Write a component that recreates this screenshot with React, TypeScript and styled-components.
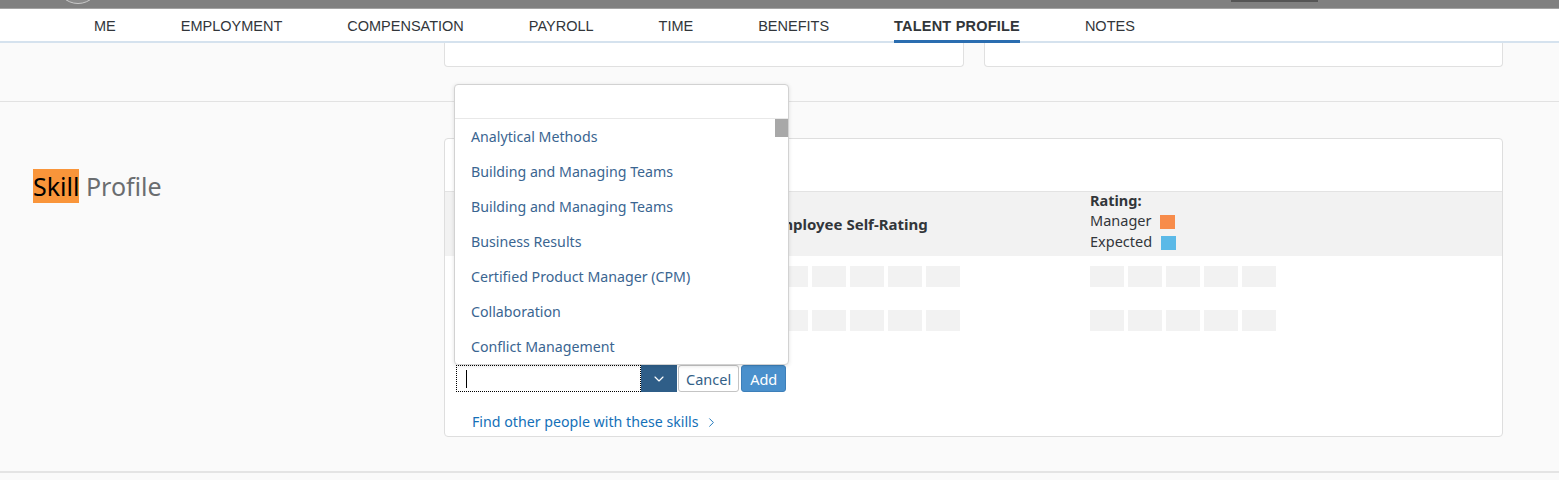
import React from 'react'
import styled, { createGlobalStyle } from 'styled-components'
import { ChevronDown, ChevronRight } from 'lucide-react'

const GlobalStyle = createGlobalStyle`
  body {
    margin: 0;
    background: #fafafa;
    font-family: "Noto Sans", "Open Sans", sans-serif;
    color: #32363a;
  }
  * { box-sizing: border-box; }
`

const ShellBar = styled.div`
  height: 9px;
  background: #808080;
  border-bottom: 1px solid #a3a3a3;
  display: flex;
  align-items: flex-end;
  padding-left: 56px;
  overflow: hidden;
`
const Avatar = styled.div`
  width: 44px;
  height: 44px;
  flex: none;
  border-radius: 50%;
  border: 1px solid #c9c9c9;
  background: #8a8a8a;
  margin-bottom: 4px;
`
const ShellSlot = styled.div`
  margin-left: auto;
  margin-right: 241px;
  align-self: flex-start;
  width: 87px;
  height: 2px;
  background: #555;
`

const Nav = styled.nav`
  height: 34px;
  background: #fff;
  border-bottom: 2px solid #d5e2ee;
  display: flex;
  gap: 65px;
  padding-left: 94px;
`
const Tab = styled.div<{ $active?: boolean }>`
  height: 34px;
  display: flex;
  align-items: center;
  font-family: "Liberation Sans", Arial, sans-serif;
  font-size: 14.5px;
  text-transform: uppercase;
  color: #32363a;
  font-weight: ${p => (p.$active ? 700 : 400)};
  letter-spacing: ${p => (p.$active ? '0.2px' : '0')};
  box-shadow: ${p => (p.$active ? 'inset 0 -3px 0 #2a6db0' : 'none')};
  margin-bottom: -2px;
`

const TopSection = styled.section`
  height: 59px;
  display: flex;
  gap: 20px;
  padding: 0 56px 0 444px;
  border-bottom: 1px solid #e2e2e2;
`
const StubCard = styled.div`
  flex: 1;
  height: 24px;
  background: #fff;
  border: 1px solid #e0e0e0;
  border-top: none;
  border-radius: 0 0 4px 4px;
`

const SkillSection = styled.section`
  display: flex;
  padding: 36px 56px 34px 0;
  border-bottom: 2px solid #e4e4e4;
`
const TitleCol = styled.div`
  width: 444px;
  flex: none;
  padding: 34px 0 0 33px;
`
const Title = styled.h2`
  margin: 0;
  font-size: 25px;
  font-weight: 400;
  line-height: 29px;
  color: #6a6d70;
  mark {
    background: #f9953a;
    color: #000;
  }
`

const Card = styled.div`
  flex: 1;
  background: #fff;
  border: 1px solid #dedede;
  border-radius: 4px;
  padding-bottom: 4px;
`
const CardHead = styled.div`
  height: 52px;
`
const Grid = styled.div`
  display: grid;
  grid-template-columns: 302px 316px 1fr;
  padding-left: 27px;
`
const HeadRow = styled(Grid)`
  height: 65px;
  background: #f2f2f2;
  border-top: 1px solid #e3e3e3;
`
const ColLabel = styled.div`
  align-self: center;
  font-size: 15px;
  font-weight: 700;
  margin-left: -4px;
`
const Legend = styled.div`
  font-size: 14.5px;
  line-height: 21px;
  margin-top: -1px;
  b { display: block; line-height: 19px; }
`
const LegendLine = styled.div`
  display: flex;
  align-items: center;
  gap: 9px;
`
const Swatch = styled.span<{ $color: string }>`
  width: 15px;
  height: 14px;
  background: ${p => p.$color};
  display: inline-block;
  margin-top: 3px;
`

const DataRow = styled(Grid)`
  height: 44px;
  padding-top: 10px;
`
const Boxes = styled.div`
  display: flex;
  gap: 4px;
`
const Box = styled.div`
  width: 34px;
  height: 21px;
  background: #f2f2f2;
`

const AddRow = styled.div`
  position: relative;
  display: flex;
  margin: 21px 0 0 11px;
  height: 27px;
`
const Input = styled.div`
  width: 185px;
  height: 27px;
  background: #fff;
  outline: 1px dotted #000;
  outline-offset: -1px;
  display: flex;
  align-items: center;
  padding-left: 10px;
`
const Caret = styled.span`
  width: 1px;
  height: 18px;
  background: #000;
`
const DropBtn = styled.div`
  width: 36px;
  height: 27px;
  background: #2f5e88;
  color: #fff;
  display: flex;
  align-items: center;
  justify-content: center;
`
const Button = styled.button<{ $primary?: boolean }>`
  height: 27px;
  margin-left: ${p => (p.$primary ? '2px' : '1px')};
  padding: 0 ${p => (p.$primary ? '8px' : '7px')};
  font-family: inherit;
  font-size: 14.5px;
  border-radius: 3px;
  border: 1px solid ${p => (p.$primary ? '#3d7fb9' : '#c4c4c4')};
  background: ${p => (p.$primary ? '#4a90cc' : '#fff')};
  color: ${p => (p.$primary ? '#fff' : '#346187')};
`

const Popup = styled.div`
  position: absolute;
  left: -2px;
  bottom: 100%;
  width: 335px;
  background: #fff;
  border: 1px solid #d2d2d2;
  border-radius: 4px;
  box-shadow: 0 1px 4px rgba(0, 0, 0, 0.12);
  overflow: hidden;
`
const Search = styled.div`
  height: 34px;
  border-bottom: 1px solid #e8e8e8;
`
const List = styled.ul`
  position: relative;
  list-style: none;
  margin: 0;
  padding: 0;
`
const Item = styled.li`
  height: 35px;
  line-height: 35px;
  padding-left: 16px;
  font-size: 14.2px;
  color: #3a6591;
`
const Thumb = styled.div`
  position: absolute;
  top: 0;
  right: 0;
  width: 13px;
  height: 18px;
  background: #a8a8a8;
`

const FindLink = styled.a`
  display: flex;
  align-items: center;
  gap: 5px;
  margin: 20px 0 0 27px;
  line-height: 20px;
  font-size: 14.2px;
  color: #1470b8;
  text-decoration: none;
`

const tabs = ['Me', 'Employment', 'Compensation', 'Payroll', 'Time', 'Benefits', 'Talent Profile', 'Notes']
const skills = [
  'Analytical Methods',
  'Building and Managing Teams',
  'Building and Managing Teams',
  'Business Results',
  'Certified Product Manager (CPM)',
  'Collaboration',
  'Conflict Management',
]

function Placeholder() {
  return (
    <Boxes>
      {[0, 1, 2, 3, 4].map(i => <Box key={i} />)}
    </Boxes>
  )
}

export default function App() {
  return (
    <>
      <GlobalStyle />
      <ShellBar>
        <Avatar />
        <ShellSlot />
      </ShellBar>
      <Nav>
        {tabs.map(t => (
          <Tab key={t} $active={t === 'Talent Profile'}>{t}</Tab>
        ))}
      </Nav>
      <TopSection>
        <StubCard />
        <StubCard />
      </TopSection>
      <SkillSection>
        <TitleCol>
          <Title><mark>Skill</mark> Profile</Title>
        </TitleCol>
        <Card>
          <CardHead />
          <HeadRow>
            <div />
            <ColLabel>Employee Self-Rating</ColLabel>
            <Legend>
              <b>Rating:</b>
              <LegendLine>Manager <Swatch $color="#f78c4b" /></LegendLine>
              <LegendLine>Expected <Swatch $color="#5bb9e7" /></LegendLine>
            </Legend>
          </HeadRow>
          {[0, 1].map(r => (
            <DataRow key={r}>
              <div />
              <Placeholder />
              <Placeholder />
            </DataRow>
          ))}
          <AddRow>
            <Popup>
              <Search />
              <List>
                {skills.map((s, i) => <Item key={i}>{s}</Item>)}
                <Thumb />
              </List>
            </Popup>
            <Input><Caret /></Input>
            <DropBtn><ChevronDown size={16} strokeWidth={1.75} /></DropBtn>
            <Button>Cancel</Button>
            <Button $primary>Add</Button>
          </AddRow>
          <FindLink href="#">
            Find other people with these skills <ChevronRight size={15} strokeWidth={1.5} />
          </FindLink>
        </Card>
      </SkillSection>
    </>
  )
}
